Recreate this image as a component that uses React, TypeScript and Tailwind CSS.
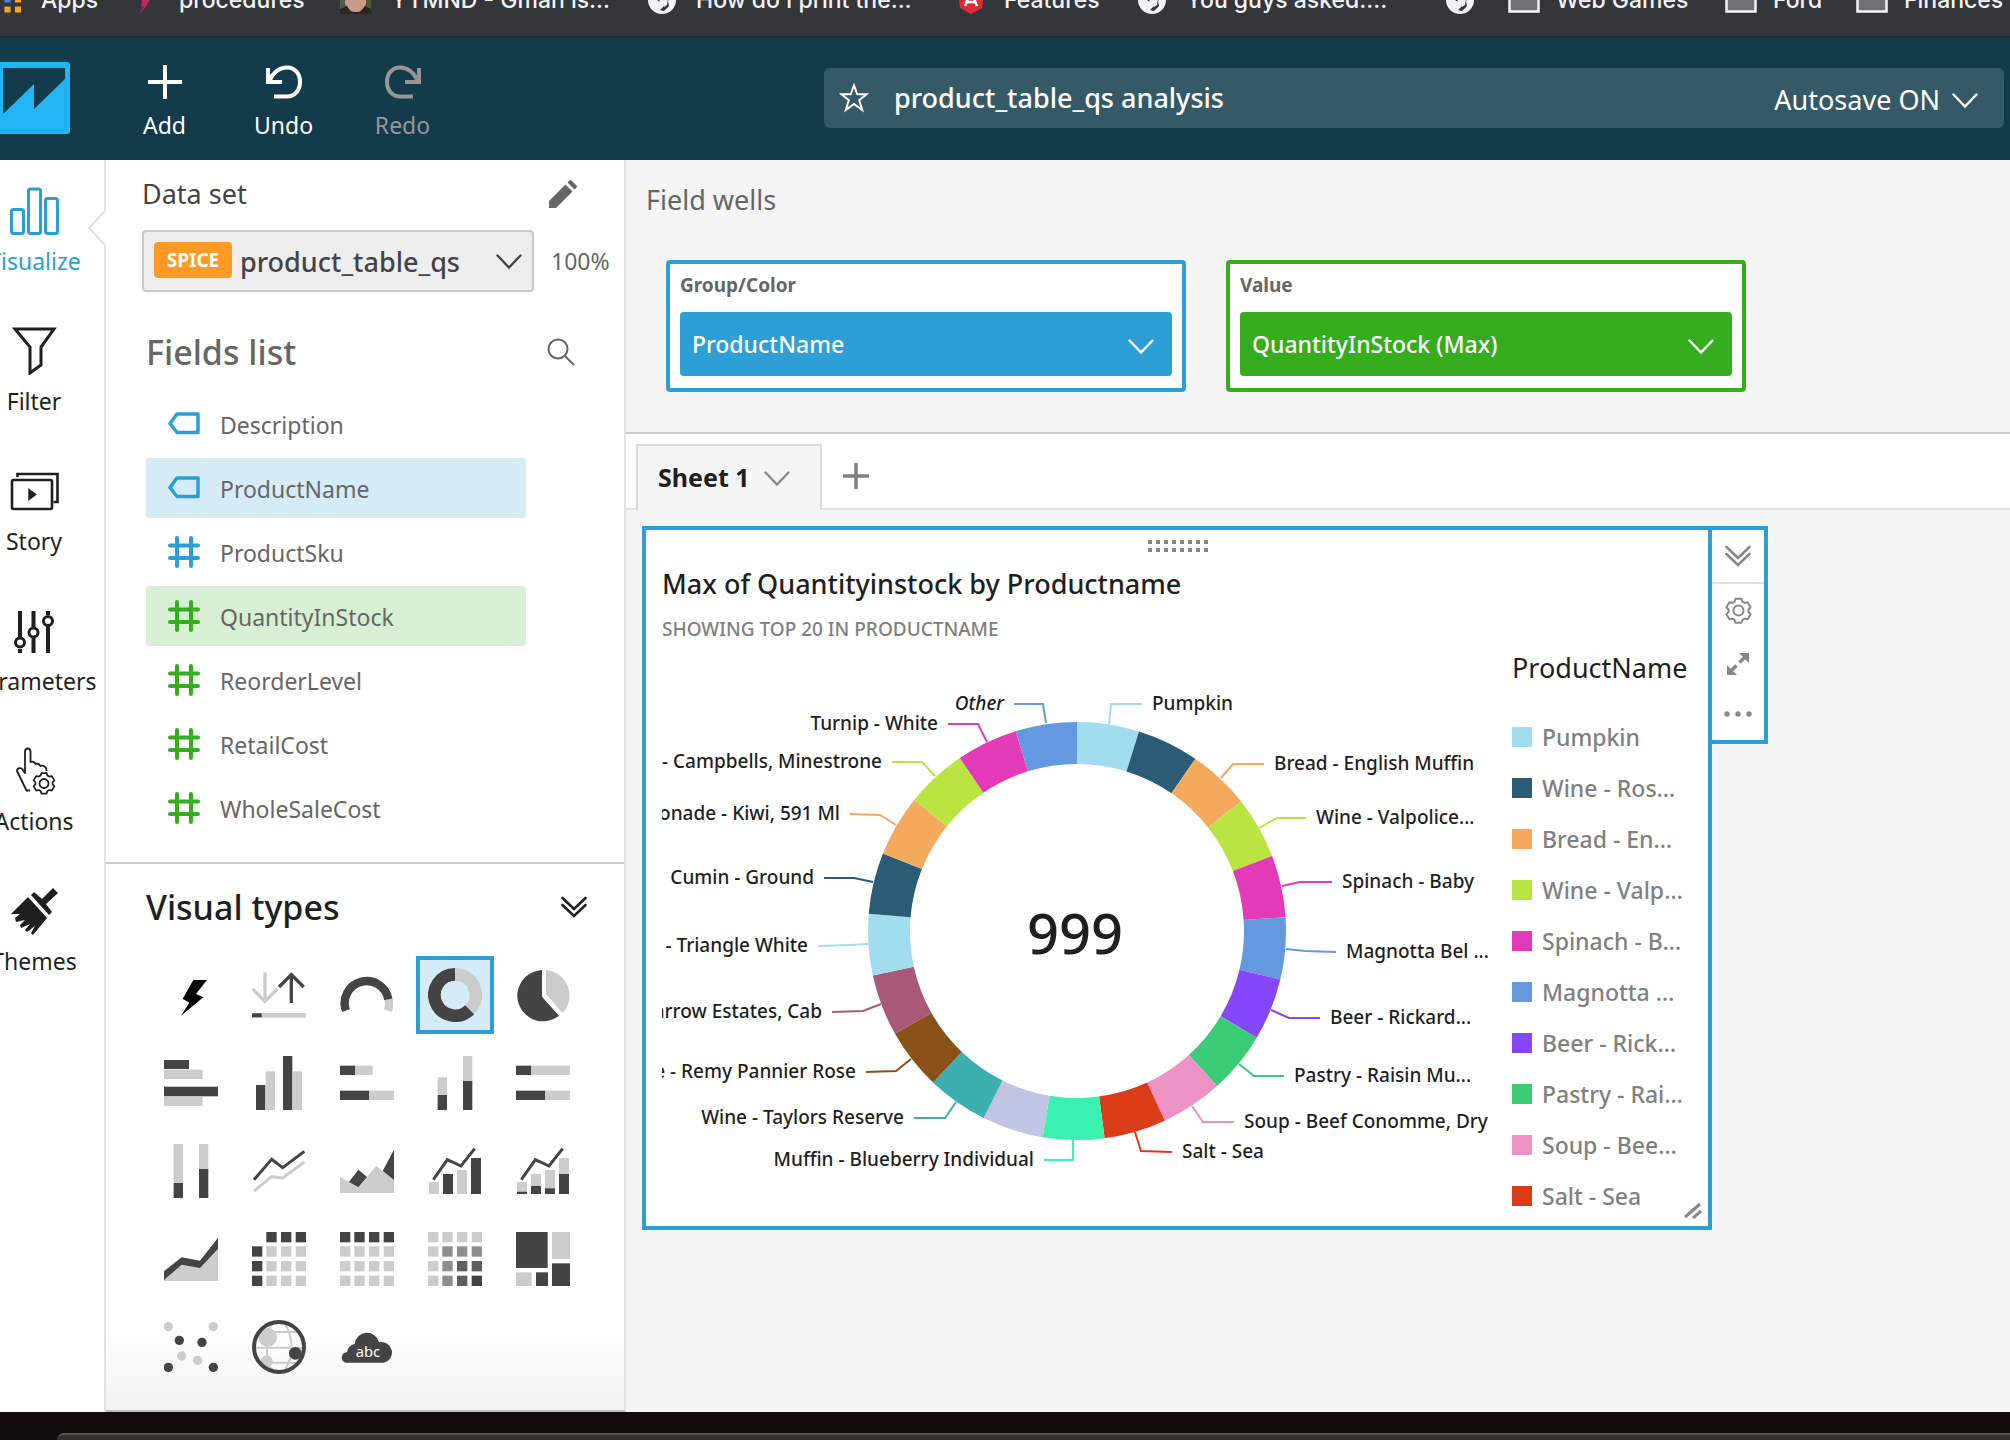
import type { ReactNode } from "react";

const DARK = "#444444";
const LIGHT = "#cccccc";

/* ---------- small icons ---------- */

function Chevron({ className }: { className: string }) {
  return (
    <svg viewBox="0 0 26 15" className={className} fill="none" stroke="currentColor" strokeWidth="2.4" strokeLinecap="round" aria-hidden="true">
      <path d="M1.5 1.5 13 13.5 24.5 1.5" />
    </svg>
  );
}

function DoubleChevron({ className }: { className: string }) {
  return (
    <svg viewBox="0 0 26 22" className={className} fill="none" stroke="currentColor" strokeWidth="2.6" strokeLinecap="round" aria-hidden="true">
      <path d="M1.5 2 13 13 24.5 2M1.5 9 13 20 24.5 9" />
    </svg>
  );
}

const GEAR =
  "M9.3 1.6h5.4l.8 2.6 1.9 1.1 2.7-.6 2.7 4.6-1.9 1.9v2.2l1.9 1.9-2.7 4.6-2.7-.6-1.9 1.1-.8 2.6H9.3l-.8-2.6-1.9-1.1-2.7.6-2.7-4.6 1.9-1.9v-2.2L1.2 9.3l2.7-4.6 2.7.6 1.9-1.1z";

function Globe() {
  return (
    <svg viewBox="0 0 28 28" className="h-7 w-7 shrink-0" aria-hidden="true">
      <circle cx="14" cy="14" r="14" fill="#f1f3f4" />
      <path d="M12 3c5-1 10 2 11 8l-3 4 1 5-5 5-4-1 4-4-1-4-5-1-3-5 2-5z" fill="#35363a" />
      <path d="M14 12l6 1-1 6-3 2-1-4-4-2z" fill="#f1f3f4" />
    </svg>
  );
}

function Folder() {
  return (
    <svg viewBox="0 0 32 28" className="h-7 w-8 shrink-0" aria-hidden="true">
      <path d="M1.5 3h11l3 4h15v18.5h-29z" fill="#717274" stroke="#f1f3f4" strokeWidth="2.5" />
    </svg>
  );
}

/* ---------- browser bookmarks ---------- */

const appDots = [
  ["#ea4335", "#ea4335", "#ea4335"],
  ["#34a853", "#4285f4", "#f5a623"],
  ["#34a853", "#f5a623", "#f5a623"],
];

const bookmarks: { label: string; width: string; gap: string; icon: ReactNode }[] = [
  {
    label: "Apps",
    width: "w-[140px]",
    gap: "gap-5",
    icon: (
      <svg viewBox="0 0 21 28" className="h-7 w-[21px] shrink-0" aria-hidden="true">
        {appDots.flatMap((row, r) => row.map((fill, c) => <rect key={`${r}${c}`} x={c * 10.5 - 6} y={r * 10 + 0.5} width="6" height="6" fill={fill} />))}
      </svg>
    ),
  },
  {
    label: "procedures",
    width: "w-[200px]",
    gap: "gap-7",
    icon: (
      <svg viewBox="0 0 11 28" className="h-7 w-[11px] shrink-0" aria-hidden="true">
        <path d="M0 28 3 8 10 0 11 12 6 20z" fill="#c2265c" />
        <path d="M0 28 1 21 4 20z" fill="#4a2a7a" />
      </svg>
    ),
  },
  {
    label: "YTMND - Gman is...",
    width: "w-[308px]",
    gap: "gap-5",
    icon: (
      <svg viewBox="0 0 31 28" className="h-7 w-[31px] shrink-0" aria-hidden="true">
        <rect width="31" height="28" fill="#4f5a44" />
        <path d="M5 0h21v18q-3 8-10 8T5 18z" fill="#c99a85" />
        <path d="M0 28v-5l7-3 4 6h9l5-6 6 3v5z" fill="#2a2422" />
      </svg>
    ),
  },
  { label: "How do I print the...", width: "w-[310px]", gap: "gap-5", icon: <Globe /> },
  {
    label: "Features",
    width: "w-[180px]",
    gap: "gap-5",
    icon: (
      <svg viewBox="0 0 26 28" className="h-7 w-[26px] shrink-0" aria-hidden="true">
        <path d="M13 0 26 5 24 22 13 28 2 22 0 5z" fill="#dd2c33" />
        <path d="M7 20 13 5l6 15M9 16h8" fill="none" stroke="#fff" strokeWidth="2.5" />
      </svg>
    ),
  },
  { label: "You guys asked:...", width: "w-[308px]", gap: "gap-5", icon: <Globe /> },
  { label: "", width: "w-[62px]", gap: "gap-5", icon: <Globe /> },
  { label: "Web Games", width: "w-[217px]", gap: "gap-4", icon: <Folder /> },
  { label: "Ford", width: "w-[131px]", gap: "gap-4", icon: <Folder /> },
  { label: "Finances", width: "w-[160px]", gap: "gap-4", icon: <Folder /> },
];

function BookmarksBar() {
  return (
    <nav aria-label="Bookmarks" className="flex h-[38px] items-start overflow-hidden border-b-2 border-[#292b2b] bg-[#35363a]">
      {bookmarks.map((b, i) => (
        <a key={i} href="#" aria-label={b.label || "Bookmark"} className={`${b.width} ${b.gap} -mt-[14px] flex h-7 shrink-0 items-center font-[Inter,sans-serif] text-[23px] leading-7 font-medium whitespace-nowrap text-[#f1f3f4]`}>
          {b.icon}
          {b.label && <span>{b.label}</span>}
        </a>
      ))}
    </nav>
  );
}

/* ---------- application header ---------- */

function ToolButton({ label, muted, children }: { label: string; muted?: boolean; children: ReactNode }) {
  return (
    <button type="button" disabled={muted} className={`flex w-[119px] flex-col items-center gap-[7px] pt-[7px] text-[23px] leading-8 ${muted ? "text-[#969696]" : "text-white"}`}>
      <svg viewBox="0 0 40 40" className="h-10 w-10" fill="none" stroke="currentColor" strokeWidth="4" aria-hidden="true">
        {children}
      </svg>
      {label}
    </button>
  );
}

function Header() {
  return (
    <header className="flex h-[122px] items-center bg-[#133b4b] pr-[6px] pb-[2px]">
      <a href="#" aria-label="QuickSight home" className="shrink-0">
        <svg viewBox="0 0 70 72" className="h-[72px] w-[70px]" aria-hidden="true">
          <path d="M0 0h67q3 0 3 3v66q0 3-3 3H0z" fill="#20b6f3" />
          <path d="M3 6h62v11L34 47V22L3 52z" fill="#133b4b" />
        </svg>
      </a>
      <div className="ml-[35px] flex shrink-0">
        <ToolButton label="Add">
          <path d="M20 3v34M3 20h34" />
        </ToolButton>
        <ToolButton label="Undo">
          <path d="M4 6v14h14" />
          <path d="M5 19C10 9 17 5.5 23 5.5c8 0 13 6 13 14.5 0 9-6 14.5-13 14.5H10" />
        </ToolButton>
        <ToolButton label="Redo" muted>
          <path d="M36 6v14H22" />
          <path d="M35 19C30 9 23 5.5 17 5.5 9 5.5 4 11.5 4 20c0 9 6 14.500 13 14.500h13" />
        </ToolButton>
      </div>
      <div className="ml-[362px] flex h-[60px] flex-1 items-center rounded-md bg-[#365967] pr-[26px] pl-[15px] text-[27px] text-white">
        <button type="button" aria-label="Add to favorites" className="shrink-0">
          <svg viewBox="0 0 30 30" className="h-[30px] w-[30px]" fill="none" stroke="currentColor" strokeWidth="2" aria-hidden="true">
            <path d="M15 2.500 18.300 11.300H27.500L20.200 17.200 23.200 27 15 21 6.800 27 9.800 17.200 2.500 11.300H11.700z" />
          </svg>
        </button>
        <h1 className="ml-[25px] flex-1 font-medium">product_table_qs analysis</h1>
        <button type="button" className="flex items-center gap-3 pt-1">
          Autosave ON
          <Chevron className="h-[15px] w-[26px]" />
        </button>
      </div>
    </header>
  );
}

/* ---------- left rail ---------- */

const railItems: { label: string; icon: ReactNode }[] = [
  {
    label: "Visualize",
    icon: (
      <g fill="none" stroke="currentColor" strokeWidth="3">
        <rect x="1.500" y="22.500" width="12" height="24" rx="2" />
        <rect x="18.500" y="2" width="12" height="44.500" rx="2" />
        <rect x="35.500" y="11.500" width="12" height="35" rx="2" />
      </g>
    ),
  },
  { label: "Filter", icon: <path d="M5 2h39L31 20v18l-11 8V20z" fill="none" stroke="currentColor" strokeWidth="3" /> },
  {
    label: "Story",
    icon: (
      <g fill="none" stroke="currentColor" strokeWidth="2.600">
        <rect x="2" y="13" width="40" height="29" rx="1.500" />
        <path d="M7.500 10V7h40v28h-4" />
        <path d="m18.500 21.500 8 6-8 6z" fill="currentColor" strokeWidth="0.500" />
      </g>
    ),
  },
  {
    label: "Parameters",
    icon: (
      <g fill="none" stroke="currentColor" strokeWidth="4">
        <path d="M10 4v26M10 42v4M23.500 4v16M23.500 31v15M38 4v4M38 19v27" />
        <g strokeWidth="3">
          <circle cx="10" cy="35.500" r="4.500" />
          <circle cx="23.500" cy="25.500" r="4.500" />
          <circle cx="38" cy="14" r="4.500" />
        </g>
      </g>
    ),
  },
  {
    label: "Actions",
    icon: (
      <g fill="none" stroke="currentColor" strokeWidth="1.800" strokeLinejoin="round">
        <path d="M20 43.500h-3.500L7 24c0-3 4-4 6-1l2 3V4.500c0-4 5.500-4 5.500 0V15c2-1 4 0 5 2 2-1 4 0 5 2 3-1 6 1 6 4v1" />
        <g transform="translate(22.500 24.500)">
          <path d={GEAR} transform="scale(0.960)" />
          <circle cx="11.500" cy="12" r="4.500" />
        </g>
      </g>
    ),
  },
  {
    label: "Themes",
    icon: (
      <g fill="currentColor">
        <path d="M43 1 48 6 36 17 42 25 39 28 21 8 24 5 32 12z" />
        <path d="M18 10 37 31 23 48 21 46 25 39 17 45 15 43 20 37 11 41 10 38 15 33 6 35 5 31 10 27 1 27z" />
      </g>
    ),
  },
];

function Rail() {
  return (
    <nav aria-label="Workspace" className="relative w-[106px] shrink-0 border-r-2 border-[#e1e1e1] bg-white">
      <div className="overflow-hidden">
        <ul className="-ml-9 flex w-[140px] flex-col">
          {railItems.map((item, i) => (
            <li key={item.label} className="h-[140px] pt-[27px]">
              <a href="#" aria-current={i === 0 ? "page" : undefined} className={`flex flex-col items-center gap-[10px] text-[23px] leading-8 ${i === 0 ? "text-[#2a9fd6]" : "text-[#1f1f1f]"}`}>
                <svg viewBox="0 0 49 48" className="h-12 w-[49px]" aria-hidden="true">
                  {item.icon}
                </svg>
                {item.label}
              </a>
            </li>
          ))}
        </ul>
      </div>
      <svg viewBox="0 0 18 36" className="absolute top-[50px] -right-[2px] h-9 w-[18px]" aria-hidden="true">
        <path d="M18 1 1 18 18 35z" fill="#fff" />
        <path d="M17 1 1 18 17 35" fill="none" stroke="#e1e1e1" strokeWidth="2" />
      </svg>
    </nav>
  );
}

/* ---------- data panel ---------- */

const fields = [
  { name: "Description", kind: "tag", tone: "text-[#2a9fd6]", bg: "" },
  { name: "ProductName", kind: "tag", tone: "text-[#2a9fd6]", bg: "bg-[#d5ebf6]" },
  { name: "ProductSku", kind: "hash", tone: "text-[#2a9fd6]", bg: "" },
  { name: "QuantityInStock", kind: "hash", tone: "text-[#35ad1f]", bg: "bg-[#d7efd2]" },
  { name: "ReorderLevel", kind: "hash", tone: "text-[#35ad1f]", bg: "" },
  { name: "RetailCost", kind: "hash", tone: "text-[#35ad1f]", bg: "" },
  { name: "WholeSaleCost", kind: "hash", tone: "text-[#35ad1f]", bg: "" },
];

function FieldIcon({ kind, tone }: { kind: string; tone: string }) {
  return (
    <svg viewBox="0 0 32 32" className={`h-8 w-8 ${tone}`} fill="none" stroke="currentColor" strokeWidth="3.500" aria-hidden="true">
      {kind === "tag" ? (
        <path d="M9 6h21v18.500H9L2 15.500z" strokeLinejoin="round" />
      ) : (
        <path d="M9 2v28M23 2v28M2 9.500h28M2 22h28" strokeLinecap="round" strokeWidth="4" />
      )}
    </svg>
  );
}

type Box = [number, number, number, number, string];
const boxes = (list: Box[]) => list.map(([x, y, w, h, f], i) => <rect key={i} x={x} y={y} width={w} height={h} fill={f} />);

const gridAt = [0, 43, 87, 131];
const cellGrid = (rows: (string | null)[][]) =>
  rows.flatMap((row, r) =>
    row.map((fill, c) => fill && <rect key={`${r}-${c}`} x={gridAt[c]} y={gridAt[r]} width="31" height="31" fill={fill} />),
  );
const MID = "#8e8e8e";
const DIM = "#605e60";

const trend = <path d="M16 107 58 47 99 66 140 14" fill="none" stroke={DARK} strokeWidth="9" />;

const visualTypes: { name: string; art: ReactNode }[] = [
  { name: "AutoGraph", art: <path d="M88 36h41L96 78l22 10L51 143 76 104 56 92z" fill="#000" /> },
  {
    name: "KPI",
    art: (
      <>
        <path d="M39 13v88M2 63l37 37 37-37" fill="none" stroke={LIGHT} strokeWidth="10" />
        <path d="M118 105V20M81 57l37-37 37 37" fill="none" stroke={DARK} strokeWidth="10" />
        {boxes([[0, 135, 162, 14, LIGHT], [0, 136, 29, 12, DARK]])}
      </>
    ),
  },
  {
    name: "Gauge",
    art: (
      <g fill="none" strokeWidth="25">
        <path d="M145 92A66 66 0 0 1 144 128" stroke={LIGHT} />
        <path d="M18 128A66 66 0 1 1 145 94" stroke={DARK} />
      </g>
    ),
  },
  {
    name: "Donut chart",
    art: (
      <g fill="none" strokeWidth="38">
        <path d="M81 19A62 62 0 0 1 125 125" stroke={LIGHT} />
        <path d="M125 125A62 62 0 1 1 81 19" stroke={DARK} />
      </g>
    ),
  },
  {
    name: "Pie chart",
    art: (
      <>
        <path d="M78 6V86L129 143A77 77 0 1 1 78 6z" fill={DARK} />
        <path d="M90 6V79L140 135A77 77 0 0 0 90 6z" fill={LIGHT} />
      </>
    ),
  },
  { name: "Horizontal bar chart", art: boxes([[0, 12, 75, 27, DARK], [0, 41, 116, 28, LIGHT], [0, 92, 162, 29, DARK], [0, 122, 116, 28, LIGHT]]) },
  { name: "Vertical bar chart", art: boxes([[12, 87, 28, 75, DARK], [41, 46, 28, 116, LIGHT], [93, 0, 28, 162, DARK], [122, 46, 28, 116, LIGHT]]) },
  { name: "Horizontal stacked bar chart", art: boxes([[0, 29, 46, 28, DARK], [46, 29, 52, 28, LIGHT], [0, 104, 87, 28, DARK], [87, 104, 75, 28, LIGHT]]) },
  { name: "Vertical stacked bar chart", art: boxes([[29, 64, 28, 53, LIGHT], [29, 117, 28, 45, DARK], [105, 0, 28, 75, LIGHT], [105, 75, 28, 87, DARK]]) },
  { name: "Horizontal stacked 100% bar chart", art: boxes([[0, 29, 46, 28, DARK], [46, 29, 116, 28, LIGHT], [0, 104, 87, 28, DARK], [87, 104, 75, 28, LIGHT]]) },
  { name: "Vertical stacked 100% bar chart", art: boxes([[29, 0, 28, 117, LIGHT], [29, 117, 28, 45, DARK], [105, 0, 28, 75, LIGHT], [105, 75, 28, 87, DARK]]) },
  {
    name: "Line chart",
    art: (
      <g fill="none" strokeWidth="9">
        <path d="M6 141 59 98 92 102 157 54" stroke={LIGHT} />
        <path d="M6 107 59 46 92 71 157 22" stroke={DARK} />
      </g>
    ),
  },
  {
    name: "Area line chart",
    art: (
      <>
        <path d="M25 116 55 77 82 100 55 130zM162 17 128 81 162 110z" fill={DARK} />
        <path d="M0 98 55 130 109 65 162 108V147H0z" fill={LIGHT} />
      </>
    ),
  },
  { name: "Clustered bar combo chart", art: <>{trend}{boxes([[3, 114, 30, 36, LIGHT], [45, 90, 30, 60, DARK], [87, 78, 30, 72, LIGHT], [129, 42, 30, 108, DARK]])}</> },
  {
    name: "Stacked bar combo chart",
    art: (
      <>
        {trend}
        {boxes([[3, 114, 30, 29, LIGHT], [3, 143, 30, 7, DARK], [45, 90, 30, 36, LIGHT], [45, 126, 30, 24, DARK], [87, 78, 30, 55, LIGHT], [87, 133, 30, 17, DARK], [129, 42, 30, 48, LIGHT], [129, 90, 30, 60, DARK]])}
      </>
    ),
  },
  {
    name: "Stacked area line chart",
    art: (
      <>
        <path d="M0 146 53 98 108 106 162 48V147H0z" fill={LIGHT} />
        <path d="M0 118 53 76 108 86 162 17V50L108 108 53 98 0 145z" fill={DARK} />
      </>
    ),
  },
  { name: "Pivot table", art: cellGrid([[null, DARK, DARK, DARK], [DARK, LIGHT, LIGHT, LIGHT], [DARK, LIGHT, LIGHT, LIGHT], [DARK, LIGHT, LIGHT, LIGHT]]) },
  { name: "Table", art: cellGrid([[DARK, DARK, DARK, DARK], [LIGHT, LIGHT, LIGHT, LIGHT], [LIGHT, LIGHT, LIGHT, LIGHT], [LIGHT, LIGHT, LIGHT, LIGHT]]) },
  { name: "Heat map", art: cellGrid([[LIGHT, LIGHT, LIGHT, LIGHT], [LIGHT, MID, MID, MID], [LIGHT, MID, DIM, DIM], [LIGHT, MID, DIM, DARK]]) },
  { name: "Tree map", art: boxes([[0, 0, 95, 108, DARK], [108, 0, 54, 81, LIGHT], [0, 121, 47, 41, LIGHT], [60, 121, 36, 41, DARK], [108, 94, 54, 68, DARK]]) },
  {
    name: "Scatter plot",
    art: (
      <>
        {([[13, 20, LIGHT], [148, 20, LIGHT], [46, 61, DARK], [114, 67, DARK], [53, 108, LIGHT], [101, 121, LIGHT], [13, 142, DARK], [148, 142, DARK]] as [number, number, string][]).map(([x, y, f]) => (
          <circle key={`${x}-${y}`} cx={x} cy={y} r="14" fill={f} />
        ))}
      </>
    ),
  },
  {
    name: "Points on map",
    art: (
      <>
        <path d="M60 36H138M8 83H154M40 128H132M45 45V120M62 10 50 30M98 10Q140 81 98 152M46 135 66 152" fill="none" stroke={LIGHT} strokeWidth="6" />
        <circle cx="47" cy="52" r="28" fill={LIGHT} />
        <circle cx="44" cy="124" r="18" fill={LIGHT} />
        <circle cx="130" cy="100" r="19" fill={DARK} />
        <circle cx="81" cy="81" r="75" fill="none" stroke={DARK} strokeWidth="12" />
      </>
    ),
  },
  {
    name: "Word cloud",
    art: (
      <>
        <path d="M16 128A16 16 0 0 1 21 97 30 30 0 0 1 44 72 37 37 0 0 1 117 67 30 30 0 0 1 132 128z" fill={DARK} />
        <text x="84" y="110" textAnchor="middle" fontSize="44" fill="#fff">
          abc
        </text>
      </>
    ),
  },
];

function DataPanel() {
  return (
    <aside className="flex w-[520px] shrink-0 flex-col border-r-2 border-b-2 border-r-[#e1e1e1] border-b-[#bbbbbb] bg-white">
      <section className="h-[702px] pt-[18px] pl-9">
        <div className="flex h-8 items-center justify-between pr-[47px]">
          <label htmlFor="dataset" className="text-[27px] text-[#444]">
            Data set
          </label>
          <button type="button" aria-label="Edit data set">
            <svg viewBox="0 0 28 28" className="h-7 w-7 text-[#666]" fill="currentColor" aria-hidden="true">
              <path d="M0 28V21L16.500 4.500 23.500 11.500 7 28zM18.500 2.500 20.500.500Q21.500-.300 22.500.500L27.500 5.500Q28.300 6.500 27.500 7.500L25.500 9.500z" />
            </svg>
          </button>
        </div>
        <div className="mt-5 flex items-center gap-[17px]">
          <div className="relative flex h-[62px] w-[392px] items-center rounded-[4px] border-2 border-[#cacaca] bg-[#eee] pl-[10px]">
            <span className="mb-[2px] flex h-9 w-[78px] items-center justify-center rounded-[4px] bg-[#ff9a27] text-[19px] font-bold text-white">SPICE</span>
            <select id="dataset" className="ml-2 h-full flex-1 appearance-none pt-[2px] text-[27px] font-medium text-[#444] outline-none">
              <option>product_table_qs</option>
            </select>
            <Chevron className="pointer-events-none absolute right-[10px] h-[15px] w-[26px] text-[#444]" />
          </div>
          <span className="text-[23px] text-[#666]">100%</span>
        </div>
        <div className="mt-[35px] flex h-[50px] items-center justify-between pr-[49px] pl-1">
          <h2 className="text-[34px] font-medium text-[#666]">Fields list</h2>
          <button type="button" aria-label="Search fields">
            <svg viewBox="0 0 28 28" className="h-7 w-7 text-[#666]" fill="none" stroke="currentColor" strokeWidth="2" aria-hidden="true">
              <circle cx="11" cy="11" r="9.500" />
              <path d="m18 18 9 9" />
            </svg>
          </button>
        </div>
        <ul className="mt-[17px] ml-1 flex w-[380px] flex-col gap-1 text-[23px] text-[#666]">
          {fields.map((f) => (
            <li key={f.name}>
              <button type="button" className={`flex h-[60px] w-full items-center gap-5 rounded-[4px] pl-[22px] ${f.bg}`}>
                <FieldIcon kind={f.kind} tone={f.tone} />
                <span className="pt-[2px]">{f.name}</span>
              </button>
            </li>
          ))}
        </ul>
      </section>
      <section className="flex-1 border-t-2 border-[#cacaca] bg-linear-to-b from-white from-85% to-[#f3f3f3] pb-4">
        <div className="flex h-[92px] items-center justify-between pr-[37px] pb-[6px] pl-10">
          <h2 className="text-[34px] font-medium text-[#1f1f1f]">Visual types</h2>
          <button type="button" aria-label="Collapse visual types">
            <DoubleChevron className="h-[22px] w-[26px] text-[#1f1f1f]" />
          </button>
        </div>
        <ul className="ml-[46px] grid w-[430px] grid-cols-5 gap-[10px]">
          {visualTypes.map((v) => (
            <li key={v.name}>
              <button
                type="button"
                aria-label={v.name}
                aria-pressed={v.name === "Donut chart"}
                className={`flex h-[78px] w-[78px] items-center justify-center border-4 ${v.name === "Donut chart" ? "border-[#2d9fd6] bg-[#d5ebf7]" : "border-transparent"}`}
              >
                <svg viewBox="0 0 162 162" className="h-[54px] w-[54px]" aria-hidden="true">
                  {v.art}
                </svg>
              </button>
            </li>
          ))}
        </ul>
      </section>
    </aside>
  );
}

/* ---------- field wells and tabs ---------- */

function FieldWell({ title, value, frame, fill }: { title: string; value: string; frame: string; fill: string }) {
  return (
    <div className={`h-[132px] w-[520px] rounded-[4px] border-4 bg-white px-[10px] pt-[6px] ${frame}`}>
      <h3 className="h-[42px] text-[19px] leading-[30px] font-bold text-[#666]">{title}</h3>
      <button type="button" aria-haspopup="menu" className={`flex h-16 w-full items-center justify-between rounded-[4px] pr-[18px] pl-3 text-[23px] font-medium text-white ${fill}`}>
        {value}
        <Chevron className="mt-1 h-[15px] w-[26px]" />
      </button>
    </div>
  );
}

function FieldWells() {
  return (
    <section className="h-[274px] border-b-2 border-[#cacaca] bg-[#f5f5f5] pt-[22px]">
      <h2 className="pl-5 text-[27px] leading-9 text-[#666]">Field wells</h2>
      <div className="mt-[42px] ml-10 flex gap-10">
        <FieldWell title="Group/Color" value="ProductName" frame="border-[#2d9fd6]" fill="bg-[#2d9fd6]" />
        <FieldWell title="Value" value="QuantityInStock (Max)" frame="border-[#35ad1f]" fill="bg-[#35ad1f]" />
      </div>
    </section>
  );
}

function SheetTabs() {
  return (
    <div className="flex h-[76px] items-end border-b-2 border-[#e1e1e1] bg-white pl-[10px]">
      <button type="button" className="-mb-[2px] flex h-[66px] w-[186px] items-center gap-[14px] border-2 border-b-0 border-[#d9d9d9] bg-[#f5f5f5] pl-5 text-[25px] font-bold text-[#1f1f1f]">
        Sheet 1
        <Chevron className="h-[15px] w-[26px] text-[#888]" />
      </button>
      <button type="button" aria-label="Add sheet" className="mb-[18px] ml-5">
        <svg viewBox="0 0 28 28" className="h-7 w-7" fill="none" stroke="#808080" strokeWidth="3.500" aria-hidden="true">
          <path d="M14 1v26M1 14h26" />
        </svg>
      </button>
    </div>
  );
}

/* ---------- donut visual ---------- */

type Slice = { color: string; label?: string; line?: string; x?: number; y?: number; left?: boolean; italic?: boolean };

const slices: Slice[] = [
  { color: "#a2ddef", label: "Pumpkin", line: "1109,724 1111,704 1142,704", x: 1152, y: 710 },
  { color: "#2b5c75" },
  { color: "#f5a95d", label: "Bread - English Muffin", line: "1221,778 1233,764 1264,764", x: 1274, y: 770 },
  { color: "#bae441", label: "Wine - Valpolice...", line: "1259,828 1277,818 1306,818", x: 1316, y: 824 },
  { color: "#e33bb8", label: "Spinach - Baby", line: "1282,886 1300,882 1332,882", x: 1342, y: 888 },
  { color: "#6499df", label: "Magnotta Bel ...", line: "1286,949 1305,951 1336,952", x: 1346, y: 958 },
  { color: "#8646fc", label: "Beer - Rickard...", line: "1271,1010 1289,1018 1320,1018", x: 1330, y: 1024 },
  { color: "#3bcb76", label: "Pastry - Raisin Mu...", line: "1239,1064 1254,1076 1284,1076", x: 1294, y: 1082 },
  { color: "#ec92c5", label: "Soup - Beef Conomme, Dry", line: "1192,1106 1203,1122 1234,1122", x: 1244, y: 1128 },
  { color: "#dc3b18", label: "Salt - Sea", line: "1135,1132 1141,1151 1172,1152", x: 1182, y: 1158 },
  { color: "#3af1b0", label: "Muffin - Blueberry Individual", line: "1073,1140 1073,1160 1044,1160", x: 1034, y: 1166, left: true },
  { color: "#c1c4e2" },
  { color: "#3cafb1", label: "Wine - Taylors Reserve", line: "956,1102 945,1118 914,1118", x: 904, y: 1124, left: true },
  { color: "#8a5119", label: "Wine - Remy Pannier Rose", line: "911,1059 896,1071 866,1072", x: 856, y: 1078, left: true },
  { color: "#a85879", label: "Wine - Barrow Estates, Cab", line: "881,1004 863,1011 832,1012", x: 822, y: 1018, left: true },
  { color: "#a2ddef", label: "- Triangle White", line: "868,944 850,945 818,946", x: 808, y: 952, left: true },
  { color: "#2b5c75", label: "Cumin - Ground", line: "873,882 854,878 824,878", x: 814, y: 884, left: true },
  { color: "#f5a95d", label: "Lemonade - Kiwi, 591 Ml", line: "896,825 880,815 850,814", x: 840, y: 820, left: true },
  { color: "#bae441", label: "- Campbells, Minestrone", line: "935,776 922,762 892,762", x: 882, y: 768, left: true },
  { color: "#e33bb8", label: "Turnip - White", line: "987,742 978,724 948,724", x: 938, y: 730, left: true },
  { color: "#6499df", label: "Other", line: "1046,723 1043,704 1014,704", x: 1004, y: 710, left: true, italic: true },
];

const CX = 1077;
const CY = 931;
const OUTER = 209;
const INNER = 167;

const boundary = (i: number) => ((i <= 10 ? i * 17.24 : 172.4 + ((i - 10) * 187.6) / 11) * Math.PI) / 180;
const point = (r: number, a: number) => `${(CX + r * Math.sin(a)).toFixed(2)} ${(CY - r * Math.cos(a)).toFixed(2)}`;
const slicePath = (i: number) => {
  const a = boundary(i);
  const b = boundary(i + 1);
  return `M${point(OUTER, a)}A${OUTER} ${OUTER} 0 0 1 ${point(OUTER, b)}L${point(INNER, b)}A${INNER} ${INNER} 0 0 0 ${point(INNER, a)}z`;
};

function DonutChart() {
  return (
    <svg viewBox="662 652 840 562" className="h-[562px] w-[840px] shrink-0 overflow-hidden" role="img" aria-label="Max of Quantityinstock by Productname">
      {slices.map((s, i) => (
        <g key={i}>
          <path d={slicePath(i)} fill={s.color} />
          {s.line && <polyline points={s.line} fill="none" stroke={s.color} strokeWidth="2" />}
          {s.label && (
            <text x={s.x} y={s.y} textAnchor={s.left ? "end" : "start"} fontStyle={s.italic ? "italic" : "normal"} fontWeight="500" fontSize="19" fill="#1f1f1f">
              {s.label}
            </text>
          )}
        </g>
      ))}
      <text x="1075" y="954" textAnchor="middle" fontWeight="500" fontSize="56" fill="#1f1f1f">
        999
      </text>
    </svg>
  );
}

const legend = [
  ["Pumpkin", "bg-[#a2ddef]"],
  ["Wine - Ros…", "bg-[#2b5c75]"],
  ["Bread - En…", "bg-[#f5a95d]"],
  ["Wine - Valp…", "bg-[#bae441]"],
  ["Spinach - B…", "bg-[#e33bb8]"],
  ["Magnotta …", "bg-[#6499df]"],
  ["Beer - Rick…", "bg-[#8646fc]"],
  ["Pastry - Rai…", "bg-[#3bcb76]"],
  ["Soup - Bee…", "bg-[#ec92c5]"],
  ["Salt - Sea", "bg-[#dc3b18]"],
];

function Visual() {
  return (
    <div className="flex items-start">
      <article className="relative h-[704px] w-[1070px] border-4 border-[#2d9fd6] bg-white pl-4">
        <svg viewBox="0 0 60 12" className="mt-[10px] ml-[486px] h-3 w-[60px]" fill="#888" aria-hidden="true">
          {[0, 8, 16, 24, 32, 40, 48, 56].map((x) => (
            <path key={x} d={`M${x} 0h4v4h-4zM${x} 8h4v4h-4z`} />
          ))}
        </svg>
        <h2 className="mt-3 text-[27px] leading-10 font-medium text-[#1f1f1f]">Max of Quantityinstock by Productname</h2>
        <p className="mt-[9px] text-[19px] leading-8 font-medium text-[#808080] uppercase">Showing top 20 in ProductName</p>
        <div className="mt-[7px] flex">
          <DonutChart />
          <div className="ml-[10px]">
            <h3 className="text-[27px] leading-8 text-[#1f1f1f]">ProductName</h3>
            <ul className="mt-[27px] text-[23px] font-medium text-[#808080]">
              {legend.map(([name, color]) => (
                <li key={name} className="flex h-[51px] items-center gap-[10px] whitespace-nowrap">
                  <span className={`h-5 w-5 ${color}`} />
                  <span className="pt-[2px]">{name}</span>
                </li>
              ))}
            </ul>
          </div>
        </div>
        <svg viewBox="0 0 18 18" className="absolute right-[6px] bottom-[6px] h-[18px] w-[18px]" stroke="#888" strokeWidth="3" aria-hidden="true">
          <path d="M1 15 16 2M9 16 17 9" />
        </svg>
      </article>
      <div role="toolbar" aria-label="Visual options" className="-ml-1 flex h-[218px] w-[60px] flex-col items-center border-4 border-[#2d9fd6] bg-white text-[#888]">
        <button type="button" aria-label="Collapse menu" className="flex h-[54px] w-full items-center justify-center border-b-2 border-[#e1e1e1]">
          <DoubleChevron className="h-[22px] w-[26px]" />
        </button>
        <button type="button" aria-label="Format visual" className="flex h-[54px] items-center">
          <svg viewBox="0 0 24 25" className="h-7 w-[27px]" fill="none" stroke="currentColor" strokeWidth="1.800" strokeLinejoin="round" aria-hidden="true">
            <path d={GEAR} />
            <circle cx="12" cy="12" r="4.500" />
          </svg>
        </button>
        <button type="button" aria-label="Maximize" className="flex h-[52px] items-center">
          <svg viewBox="0 0 22 22" className="h-[22px] w-[22px]" fill="currentColor" aria-hidden="true">
            <path d="M12 0h10v10zM10 22H0V12z" />
            <path d="m12.500 9.500 6-6M3.500 18.500l6-6" stroke="currentColor" strokeWidth="3.500" />
          </svg>
        </button>
        <button type="button" aria-label="More options" className="flex h-[48px] items-center">
          <svg viewBox="0 0 28 6" className="h-[6px] w-7" fill="currentColor" aria-hidden="true">
            <circle cx="3" cy="3" r="2.700" />
            <circle cx="14" cy="3" r="2.700" />
            <circle cx="25" cy="3" r="2.700" />
          </svg>
        </button>
      </div>
    </div>
  );
}

export default function App() {
  return (
    <div className="flex min-h-screen flex-col overflow-x-hidden bg-[#120c0a] font-['Noto_Sans',sans-serif]">
      <BookmarksBar />
      <Header />
      <div className="flex flex-1">
        <Rail />
        <DataPanel />
        <main className="min-w-0 flex-1 bg-[#f5f5f5]">
          <FieldWells />
          <SheetTabs />
          <div className="pt-4 pl-4">
            <Visual />
          </div>
        </main>
      </div>
      <footer className="pt-[21px] pl-[57px]">
        <div className="h-[7px] rounded-tl-lg border-t-2 border-[#5a5658] bg-[#363034]" />
      </footer>
    </div>
  );
}
